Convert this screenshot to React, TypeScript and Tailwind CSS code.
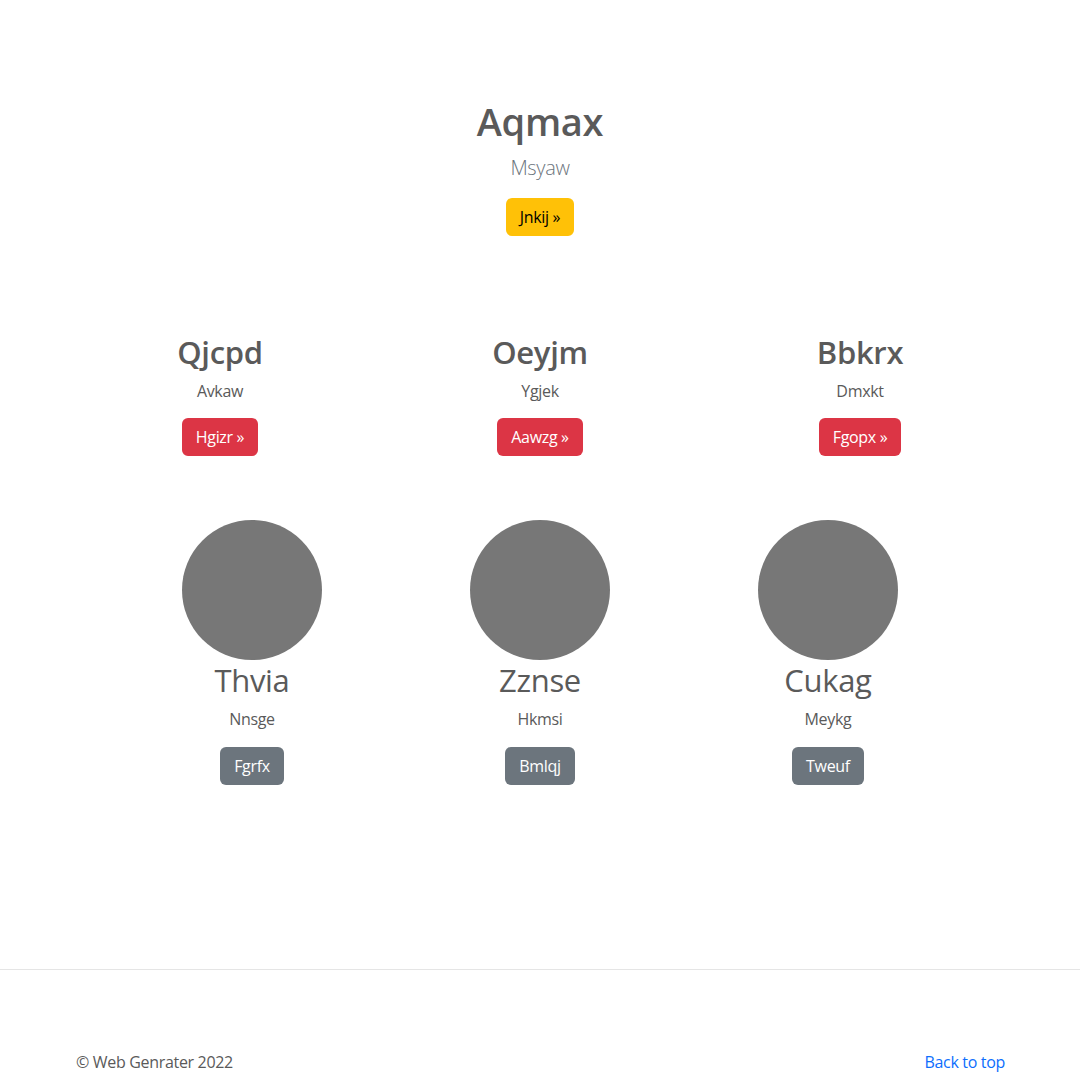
import React from "react";

const font = { fontFamily: '"Open Sans", "Noto Sans", Arial, sans-serif' };

const teasers = [
  { title: "Qjcpd", text: "Avkaw", btn: "Hgizr" },
  { title: "Oeyjm", text: "Ygjek", btn: "Aawzg" },
  { title: "Bbkrx", text: "Dmxkt", btn: "Fgopx" },
];

const people = [
  { name: "Thvia", text: "Nnsge", btn: "Fgrfx" },
  { name: "Zznse", text: "Hkmsi", btn: "Bmlqj" },
  { name: "Cukag", text: "Meykg", btn: "Tweuf" },
];

export default function App() {
  return (
    <div className="min-h-screen bg-white text-[#5a5a5a] tracking-[-0.02em]" style={font}>
      {/* hero */}
      <section className="pt-[99px] flex flex-col items-center text-center">
        <h1 className="text-[38px] leading-[1.2] font-semibold mb-2">Aqmax</h1>
        <p className="text-[20px] leading-[1.5] font-light text-[#6c757d] mb-[15px]">Msyaw</p>
        <button className="h-[38px] px-[14px] rounded-md bg-[#ffc107] text-black text-base">
          Jnkij &raquo;
        </button>
      </section>

      {/* three teasers */}
      <section className="mx-auto w-[960px] mt-[98px] grid grid-cols-3">
        {teasers.map((t) => (
          <div key={t.title} className="flex flex-col items-center text-center px-3">
            <h2 className="text-[31px] leading-[1.2] font-semibold mb-2">{t.title}</h2>
            <p className="text-base leading-6 mb-[15px]">{t.text}</p>
            <button className="h-[38px] px-[14px] rounded-md bg-[#dc3545] text-white text-base">
              {t.btn} &raquo;
            </button>
          </div>
        ))}
      </section>

      {/* people */}
      <section className="mx-auto w-[960px] px-12 mt-16 grid grid-cols-3">
        {people.map((p) => (
          <div key={p.name} className="flex flex-col items-center text-center">
            <div className="w-[140px] h-[140px] rounded-full bg-[#777]" />
            <h2 className="mt-[2px] text-[31px] leading-[1.2] font-normal mb-2">{p.name}</h2>
            <p className="text-base leading-6 mb-4">{p.text}</p>
            <button className="h-[38px] px-[14px] rounded-md bg-[#6c757d] text-white text-base">
              {p.btn}
            </button>
          </div>
        ))}
      </section>

      <hr className="mt-[184px] border-t border-[#e5e5e5]" />

      <footer className="mx-auto w-[960px] pl-4 pr-[15px] pt-20 pb-6 flex justify-between text-base leading-6">
        <p>&copy; Web Genrater 2022</p>
        <a href="#" className="text-[#0d6efd]">Back to top</a>
      </footer>
    </div>
  );
}
